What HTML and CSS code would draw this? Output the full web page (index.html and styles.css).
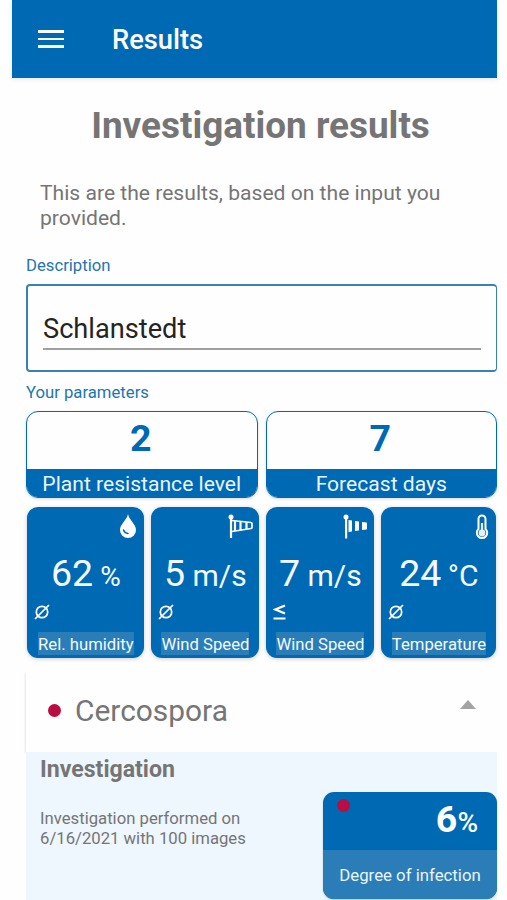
FILE: index.html
```html
<!DOCTYPE html>
<html lang="en">
<head>
  <meta charset="UTF-8">
  <meta name="viewport" content="width=device-width, initial-scale=1.0">
  <title>Results</title>
  <link rel="stylesheet" href="styles.css">
</head>
<body>
  <div class="app">
    <header class="toolbar">
      <button class="menu" aria-label="Menu">
        <span></span>
        <span></span>
        <span></span>
      </button>
      <div class="toolbar-title">Results</div>
    </header>

    <main class="content">
      <h1>Investigation results</h1>
      <p class="intro">This are the results, based on the input you provided.</p>

      <div class="label">Description</div>
      <div class="field">
        <div class="field-value">Schlanstedt</div>
      </div>

      <div class="label label-params">Your parameters</div>
      <div class="params">
        <div class="param">
          <div class="param-value">2</div>
          <div class="param-name">Plant resistance level</div>
        </div>
        <div class="param">
          <div class="param-value">7</div>
          <div class="param-name">Forecast days</div>
        </div>
      </div>

      <div class="tiles">
        <div class="tile">
          <svg class="icon" width="18" height="26" viewBox="0 0 18 26">
            <path d="M9 0C8 6 1 10 1 16a8 8 0 0 0 16 0C17 10 10 6 9 0z" fill="#fff"/>
            <path d="M4.500 16q1 3 4.500 3.500" fill="none" stroke="#0069b4" stroke-width="1.500" stroke-linecap="round"/>
          </svg>
          <div class="reading">62 <small>%</small></div>
          <div class="mode">
            <svg width="16" height="16" viewBox="0 0 16 16" fill="none" stroke="#fff" stroke-width="1.700">
              <circle cx="8" cy="8" r="5.700"/>
              <path d="M1 15L15 1"/>
            </svg>
          </div>
          <div class="tile-name"><span>Rel. humidity</span></div>
        </div>

        <div class="tile">
          <svg class="icon sock" width="25" height="26" viewBox="0 0 25 26" fill="none" stroke="#fff">
            <circle cx="3" cy="3" r="2.500" fill="#fff" stroke="none"/>
            <path d="M3 3v21" stroke-width="2.200"/>
            <path d="M4 6.500l19 2q1 0 1 1v4q0 1-1 1L4 17.500" stroke-width="1.700"/>
            <path d="M7 7v10M12.500 7.500v9M18.500 8v7" stroke-width="2.200"/>
          </svg>
          <div class="reading">5 <small class="speed">m/s</small></div>
          <div class="mode">
            <svg width="16" height="16" viewBox="0 0 16 16" fill="none" stroke="#fff" stroke-width="1.700">
              <circle cx="8" cy="8" r="5.700"/>
              <path d="M1 15L15 1"/>
            </svg>
          </div>
          <div class="tile-name"><span>Wind Speed</span></div>
        </div>

        <div class="tile">
          <svg class="icon sock" width="25" height="26" viewBox="0 0 25 26" fill="#fff">
            <circle cx="3" cy="3" r="2.500"/>
            <path d="M2 3h2.200v21.500H2z"/>
            <path d="M5.500 6L9 6.500v11L5.500 18zM12 7l4 .500v9l-4 .500zM19 8l4.500 .500q.500 0 .500 1v5q0 1-.500 1l-4.500 .500z"/>
          </svg>
          <div class="reading">7 <small class="speed">m/s</small></div>
          <div class="mode">
            <svg width="16" height="16" viewBox="0 0 16 16" fill="none" stroke="#fff" stroke-width="2.200">
              <path d="M12 1.500L2.500 5.500L12 9.500M.500 14.500h12"/>
            </svg>
          </div>
          <div class="tile-name"><span>Wind Speed</span></div>
        </div>

        <div class="tile">
          <svg class="icon" width="14" height="26" viewBox="0 0 14 26">
            <path d="M3.500 15V5a3.500 3.500 0 0 1 7 0v10a5.200 5.200 0 1 1-7 0z" fill="none" stroke="#fff" stroke-width="2"/>
            <path d="M7 9v10" stroke="#e3f0fa" stroke-width="2.200"/>
            <circle cx="7" cy="19" r="3.400" fill="#e3f0fa"/>
          </svg>
          <div class="reading">24 <small class="degrees">°C</small></div>
          <div class="mode">
            <svg width="16" height="16" viewBox="0 0 16 16" fill="none" stroke="#fff" stroke-width="1.700">
              <circle cx="8" cy="8" r="5.700"/>
              <path d="M1 15L15 1"/>
            </svg>
          </div>
          <div class="tile-name"><span>Temperature</span></div>
        </div>
      </div>

      <section class="disease">
        <div class="disease-head">
          <span class="dot"></span>
          <h2>Cercospora</h2>
          <span class="arrow"></span>
        </div>
        <div class="disease-body">
          <h3>Investigation</h3>
          <div class="disease-row">
            <p>Investigation performed on<br>6/16/2021 with 100 images</p>
            <div class="infection">
              <div class="infection-top">
                <span class="dot"></span>
                <div class="infection-value">6<small>%</small></div>
              </div>
              <div class="infection-name">Degree of infection</div>
            </div>
          </div>
        </div>
      </section>
    </main>
  </div>
</body>
</html>
```

FILE: styles.css
```css
* {
  box-sizing: border-box;
}
body {
  font-family: Roboto, "Liberation Sans", sans-serif;
  background-color: #fefefe;
  color: #757575;
  margin: 0;
  height: 900px;
  overflow: hidden;
}
h1, h2, h3, p {
  margin: 0;
}
.app {
  width: 485px;
  margin-left: 12px;
}
.toolbar {
  display: flex;
  align-items: center;
  height: 78px;
  padding: 0 26px;
  background-color: #0069b4;
  color: white;
  box-shadow: 0 1px 5px rgba(0, 60, 120, 0.12);
}
.menu {
  display: flex;
  flex-direction: column;
  gap: 5px;
  width: 26px;
  padding: 0;
  border: none;
  background: none;
}
.menu span {
  height: 2.700px;
  background-color: white;
}
.toolbar-title {
  margin-left: 48px;
  padding-top: 1px;
  font-size: 27.300px;
  font-weight: 500;
}
.content {
  padding-left: 14px;
}
h1 {
  height: 102px;
  padding-top: 26px;
  padding-right: 2px;
  font-size: 36.900px;
  line-height: 44px;
  text-align: center;
}
.intro {
  height: 72px;
  padding-left: 14px;
  font-size: 21.100px;
  line-height: 25px;
}
.label {
  height: 32px;
  padding-top: 4px;
  color: #2176b0;
  font-size: 16.700px;
  line-height: 20px;
}
.label-params {
  height: 39px;
  padding-top: 11px;
}
.field {
  height: 88px;
  padding: 27px 15px 0;
  border: 2px solid #3981b1;
  border-right-width: 1px;
  border-radius: 4px;
}
.field-value {
  height: 37px;
  border-bottom: 2px solid #a0a0a0;
  color: #242424;
  font-size: 27.200px;
  line-height: 32px;
}
.params {
  display: grid;
  grid-template-columns: 1fr 1fr;
  gap: 8px;
}
.param {
  height: 87px;
  overflow: hidden;
  border: 1.500px solid #0069b4;
  border-radius: 12px;
  box-shadow: 0 1px 3px rgba(0, 0, 0, 0.15);
  text-align: center;
}
.param-value {
  height: 57px;
  padding-top: 4px;
  padding-right: 2px;
  color: #0069b4;
  font-size: 37.500px;
  font-weight: bold;
  line-height: 44px;
}
.param-name {
  height: 29px;
  background-color: #0069b4;
  color: #eaf5ff;
  font-size: 21.100px;
  line-height: 30px;
}
.tiles {
  display: grid;
  grid-template-columns: 117px 108px 108px 115px;
  gap: 7px;
  padding: 9px 0 0 1.400px;
}
.tile {
  position: relative;
  height: 151px;
  padding-top: 44px;
  border-radius: 11px;
  background-color: #0069b4;
  box-shadow: 0 1px 4px rgba(0, 0, 0, 0.2);
  color: #f4faff;
  text-align: center;
}
.icon {
  position: absolute;
  top: 7px;
  right: 7px;
}
.sock {
  right: 6px;
}
.reading {
  height: 53px;
  font-size: 37.500px;
  line-height: 45px;
  white-space: nowrap;
}
.reading small {
  margin-left: -2px;
  font-size: 28px;
}
.reading .speed {
  margin-left: -2px;
  font-size: 30px;
}
.reading .degrees {
  margin-left: -3px;
  font-size: 30px;
}
.mode {
  height: 28px;
  padding-left: 7px;
  line-height: 0;
  text-align: left;
}
.tile-name {
  height: 24px;
  font-size: 16.700px;
  line-height: 25px;
  white-space: nowrap;
}
.tile-name span {
  display: inline-block;
  height: 23px;
  background-color: #2b7db8;
}
.disease {
  margin-top: 14px;
}
.disease-head {
  display: flex;
  align-items: center;
  height: 80px;
  padding: 0 21px 0 22px;
  box-shadow: -1px 1px 2px rgba(0, 0, 0, 0.1);
}
.dot {
  width: 13px;
  height: 13px;
  border-radius: 50%;
  background-color: #b80e43;
}
.disease-head .dot {
  margin-bottom: 3px;
}
h2 {
  margin: 0 0 3px 14px;
  font-size: 29.900px;
  font-weight: 400;
}
.arrow {
  margin: 0 0 16px auto;
  border: 8.500px solid transparent;
  border-top: none;
  border-bottom: 9px solid #a3a3a3;
}
.disease-body {
  height: 148px;
  padding: 5px 0 0 14px;
  background-color: #eef6fe;
}
h3 {
  height: 35px;
  font-size: 23.100px;
  line-height: 25px;
}
.disease-row {
  display: flex;
  justify-content: space-between;
}
.disease-row p {
  padding-top: 17px;
  font-size: 16.700px;
  line-height: 20px;
}
.infection {
  width: 174px;
  height: 107px;
  overflow: hidden;
  border-radius: 11px;
  background-color: #0069b4;
  box-shadow: 0 1px 2px rgba(0, 0, 0, 0.2);
  color: #eaf5ff;
}
.infection-top {
  display: flex;
  justify-content: space-between;
  height: 58px;
  padding: 7px 19px 0 14px;
}
.infection-value {
  color: white;
  font-size: 37.500px;
  font-weight: bold;
  line-height: 40px;
}
.infection-value small {
  font-size: 28px;
  font-weight: 500;
}
.infection-name {
  height: 49px;
  background-color: #2b7db8;
  font-size: 16.800px;
  line-height: 51px;
  text-align: center;
}
```
